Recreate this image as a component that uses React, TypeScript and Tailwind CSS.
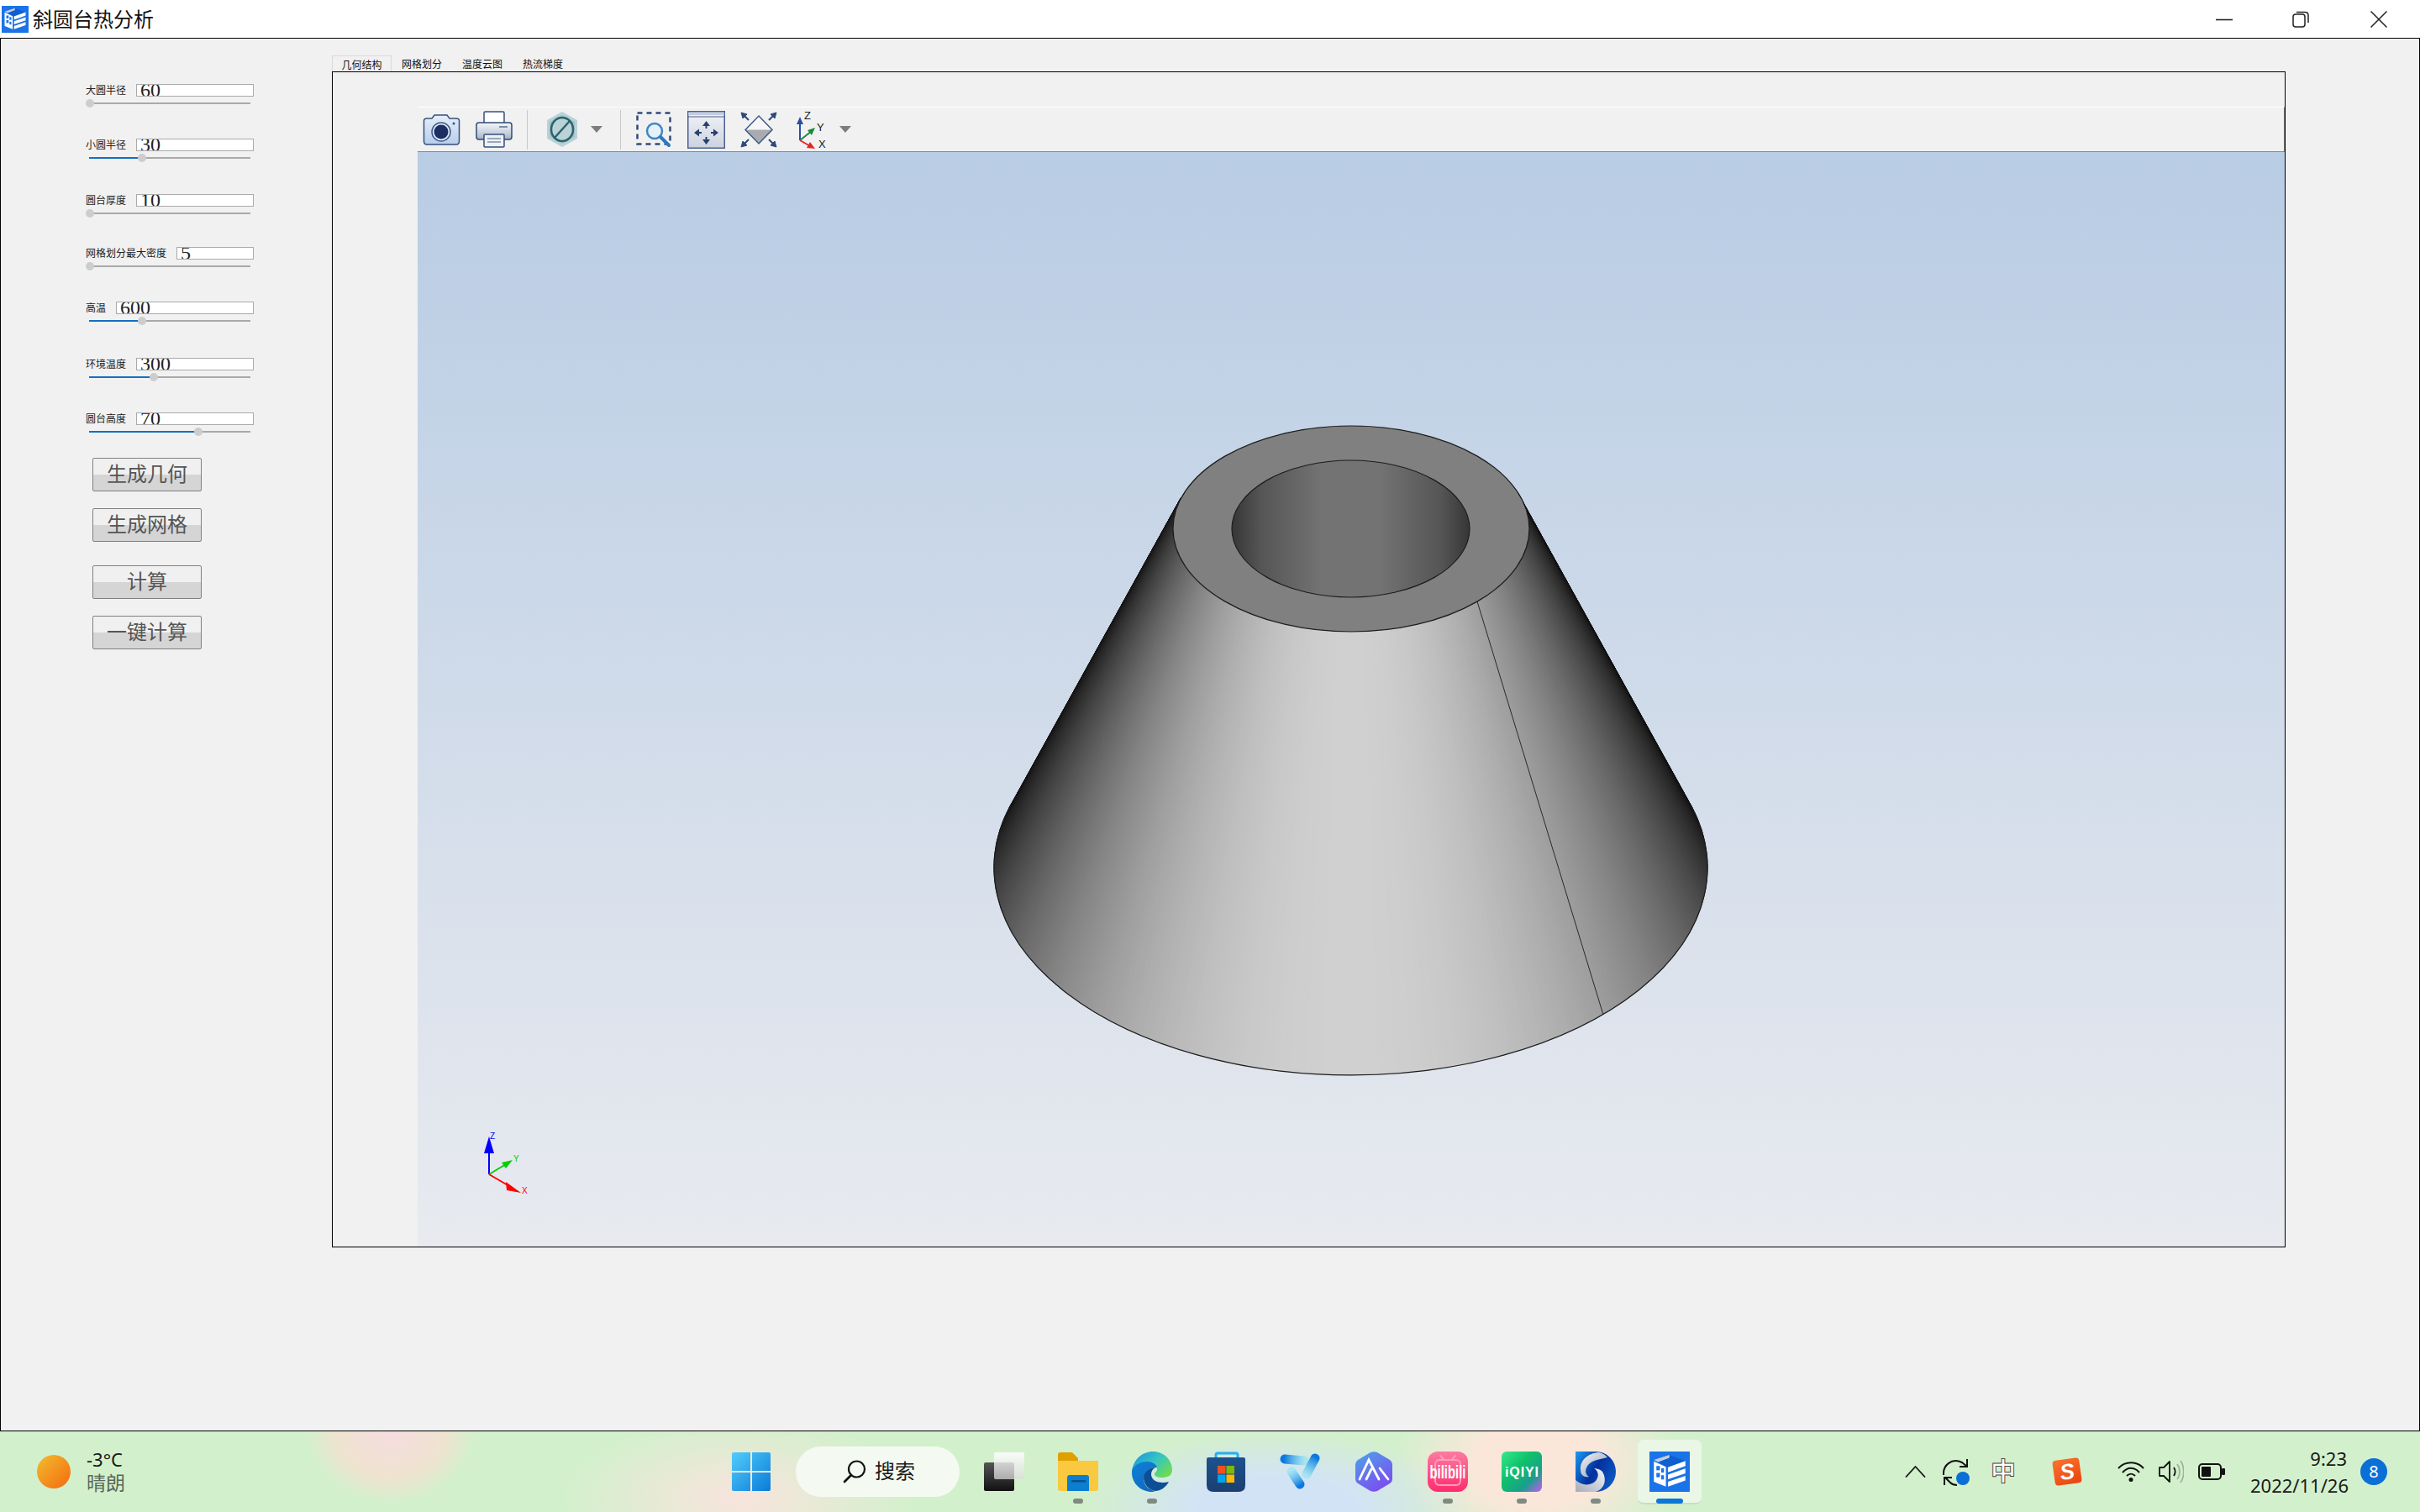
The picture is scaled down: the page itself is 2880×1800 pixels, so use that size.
import React from 'react';

const sliders = [
  { label: '大圆半径', value: '60', thumb: 107, mt: 'mt-[54px]', labelW: 'w-[60px]' },
  { label: '小圆半径', value: '30', thumb: 169, mt: 'mt-[36px]', labelW: 'w-[60px]' },
  { label: '圆台厚度', value: '10', thumb: 107, mt: 'mt-[37px]', labelW: 'w-[60px]' },
  { label: '网格划分最大密度', value: '5', thumb: 107, mt: 'mt-[34px]', labelW: 'w-[108px]' },
  { label: '高温', value: '600', thumb: 169, mt: 'mt-[36px]', labelW: 'w-[36px]' },
  { label: '环境温度', value: '300', thumb: 183, mt: 'mt-[38px]', labelW: 'w-[60px]' },
  { label: '圆台高度', value: '70', thumb: 236, mt: 'mt-[36px]', labelW: 'w-[60px]' },
];

const buttons = [
  { label: '生成几何', mt: 'mt-[25px]' },
  { label: '生成网格', mt: 'mt-[20px]' },
  { label: '计算', mt: 'mt-[28px]' },
  { label: '一键计算', mt: 'mt-[20px]' },
];

const tabs = ['几何结构', '网格划分', '温度云图', '热流梯度'];

function SliderRow({ label, value, thumb, mt, labelW }: (typeof sliders)[number]) {
  return (
    <div className={`h-[29px] w-[200px] ${mt}`}>
      <div className="flex h-[15px] items-center">
        <span className={`${labelW} mt-[2px] shrink-0 text-[12px] leading-[15px] text-[#222]`}>{label}</span>
        <div className="h-[15px] flex-1 overflow-hidden border border-[#aaaaaa] bg-white pl-[4px]">
          <div className="-mt-[6px] font-['Liberation_Serif',serif] text-[24px] leading-[24px] text-[#222]">{value}</div>
        </div>
      </div>
      <div className="relative mt-[7px] ml-[4px] h-[2px] w-[192px] bg-[#a9a9a9]">
        <div className="h-[2px] bg-[#1270c4]" style={{ width: thumb - 106 }} />
        <div
          className="absolute -top-[4px] h-[10px] w-[10px] -translate-x-1/2 rounded-full bg-[#cdcdcd]"
          style={{ left: thumb - 106 }}
        />
      </div>
    </div>
  );
}

function AppIcon({ size }: { size: number }) {
  return (
    <svg width={size} height={size} viewBox="0 0 32 32">
      <rect width="32" height="32" rx="0.5" fill="#1a73e8" />
      <polygon points="15.8,2.7 28.5,7.5 14.5,12.5 6.9,8.4" fill="#0f5fd0" />
      <polygon points="3.5,6.7 15.8,2.7 15.8,5 6.9,8.4" fill="#c5cedb" />
      <polygon points="3.5,7.8 13,12.2 13,27.8 3.5,24" fill="#fff" />
      <rect x="5.5" y="11.5" width="2.8" height="3.4" fill="#1a73e8" />
      <rect x="9.3" y="13.3" width="2.2" height="3.4" fill="#1a73e8" />
      <rect x="5.5" y="17" width="2.8" height="3.4" fill="#1a73e8" />
      <rect x="9.3" y="18.8" width="2.2" height="3.4" fill="#1a73e8" />
      <polygon points="14.7,12.5 28.5,7.5 28.5,11.5 14.7,16.5" fill="#fff" />
      <polygon points="14.7,18.3 28.5,13.5 28.5,17.3 14.7,22" fill="#fff" />
      <polygon points="14.7,24 28.5,19.3 28.5,23 14.7,27.8" fill="#fff" />
    </svg>
  );
}

function Caret() {
  return (
    <svg width="14" height="8" viewBox="0 0 14 8" className="shrink-0">
      <polygon points="0,0 14,0 7,8" fill="#7d7d7d" />
    </svg>
  );
}

function ToolbarSeparator({ className }: { className: string }) {
  return <div className={`h-[47px] w-px bg-[#c8c8c8] ${className}`} />;
}

function Toolbar() {
  return (
    <div className="flex h-[54px] shrink-0 items-center border-t border-r border-b border-t-white border-r-[#777] border-b-[#8a8a8a] bg-[#f1f1f1] pl-[6px]">
      {/* camera */}
      <svg width="45" height="37" viewBox="0 0 45 37" className="shrink-0">
        <defs>
          <linearGradient id="camBody" x1="0" y1="0" x2="0" y2="1">
            <stop offset="0" stopColor="#e6effa" />
            <stop offset="1" stopColor="#b7cdea" />
          </linearGradient>
        </defs>
        <path d="M1.5 8 Q1.5 5 5 5 H11 L14 1 H29 L32 5 H40 Q43.5 5 43.5 8 V32 Q43.5 36 40 36 H5 Q1.5 36 1.5 32 Z" fill="url(#camBody)" stroke="#36507e" strokeWidth="1.5" />
        <circle cx="22" cy="21" r="11" fill="#e2ebf7" stroke="#3d5a8c" strokeWidth="1.5" />
        <circle cx="22" cy="21" r="8.5" fill="#1b2f62" />
        <circle cx="37" cy="11" r="1.5" fill="#36507e" />
      </svg>
      {/* printer */}
      <svg width="44" height="44" viewBox="0 0 44 44" className="ml-[18px] shrink-0">
        <defs>
          <linearGradient id="prnBody" x1="0" y1="0" x2="0" y2="1">
            <stop offset="0" stopColor="#f4f6f9" />
            <stop offset="0.6" stopColor="#c8d2de" />
            <stop offset="1" stopColor="#9fb0c4" />
          </linearGradient>
        </defs>
        <rect x="10" y="1" width="24" height="15" rx="1.5" fill="#fff" stroke="#36507e" strokeWidth="1.5" />
        <rect x="1" y="14" width="42" height="20" rx="3" fill="url(#prnBody)" stroke="#2f4a72" strokeWidth="1.5" />
        <rect x="28" y="18" width="10" height="2" fill="#7c8ea6" />
        <rect x="10" y="28" width="24" height="15" rx="1" fill="#eef1f5" stroke="#36507e" strokeWidth="1.5" />
        <path d="M14 33 H30 M14 37 H30" stroke="#7c8ea6" strokeWidth="1.5" />
      </svg>
      <ToolbarSeparator className="ml-[17px]" />
      {/* no-entry hexagon */}
      <svg width="36" height="42" viewBox="0 0 36 42" className="ml-[23px] shrink-0">
        <polygon points="18,0 36,10 36,32 18,42 0,32 0,10" fill="#b9d2d6" />
        <polygon points="18,4 33,12 33,30 18,38 3,30 3,12" fill="#a3c0c6" />
        <ellipse cx="18" cy="21" rx="13" ry="14" fill="#bcd2d6" stroke="#28656d" strokeWidth="2.5" />
        <path d="M9 31 L27 11" stroke="#28656d" strokeWidth="2.5" />
      </svg>
      <div className="ml-[16px]">
        <Caret />
      </div>
      <ToolbarSeparator className="ml-[21px]" />
      {/* zoom window */}
      <svg width="43" height="42" viewBox="0 0 43 42" className="ml-[18px] shrink-0">
        <rect x="1.5" y="1.5" width="39" height="37" fill="none" stroke="#2f4a7a" strokeWidth="2.5" strokeDasharray="6 5" />
        <circle cx="22" cy="23" r="9" fill="#e6f0fa" stroke="#3f86c4" strokeWidth="2.5" />
        <path d="M29 30 L39 40" stroke="#2f78c0" strokeWidth="4" strokeLinecap="round" />
      </svg>
      {/* pan window */}
      <svg width="45" height="45" viewBox="0 0 45 45" className="ml-[18px] shrink-0">
        <defs>
          <linearGradient id="panBody" x1="0" y1="0" x2="0" y2="1">
            <stop offset="0" stopColor="#f2f3f7" />
            <stop offset="1" stopColor="#ccd2df" />
          </linearGradient>
        </defs>
        <rect x="0.75" y="0.75" width="43.5" height="43.5" fill="url(#panBody)" stroke="#4a618f" strokeWidth="1.5" />
        <rect x="1.5" y="2" width="42" height="3" fill="#c2cee0" />
        <path d="M1 7 H44" stroke="#4a618f" strokeWidth="1" />
        <path d="M22.5 17 V21 M22.5 31 V35 M13 26 H17 M28 26 H32" stroke="#28406e" strokeWidth="2" />
        <path d="M22.5 12 L18 18 H27 Z M22.5 40 L18 34 H27 Z M8 26 L14 21.5 V30.5 Z M37 26 L31 21.5 V30.5 Z" fill="#28406e" />
      </svg>
      {/* fit all */}
      <svg width="44" height="43" viewBox="0 0 44 43" className="ml-[18px] shrink-0">
        <polygon points="22,5 38,21.5 6,21.5" fill="#f6f6f8" />
        <polygon points="6,21.5 38,21.5 22,38" fill="#a9abb1" />
        <polygon points="22,5 38,21.5 22,38 6,21.5" fill="none" stroke="#40598a" strokeWidth="1.5" />
        <path d="M1 1 L8 3 L3 8 Z M43 1 L36 3 L41 8 Z M1 42 L8 40 L3 35 Z M43 42 L36 40 L41 35 Z" fill="#2f4a7a" stroke="#2f4a7a" />
        <path d="M4 4 L10 10 M40 4 L34 10 M4 39 L10 33 M40 39 L34 33" stroke="#2f4a7a" strokeWidth="2" />
      </svg>
      {/* axes */}
      <svg width="38" height="46" viewBox="0 0 38 46" className="ml-[23px] shrink-0">
        <path d="M4 36 V14" stroke="#2a4ea6" strokeWidth="2" />
        <polygon points="4,8 0,17 8,17" fill="#2a4ea6" />
        <path d="M4 36 L18 25" stroke="#1a8a3c" strokeWidth="2" />
        <polygon points="22,21 13,24 18,30" fill="#1a8a3c" />
        <path d="M4 36 L18 44" stroke="#e02828" strokeWidth="2" />
        <polygon points="22,46 12,45 16,38" fill="#e02828" />
        <text x="9" y="11" fontSize="13" fill="#222" fontFamily="'Liberation Sans',sans-serif">Z</text>
        <text x="24" y="25" fontSize="13" fill="#222" fontFamily="'Liberation Sans',sans-serif">Y</text>
        <text x="26" y="45" fontSize="13" fill="#222" fontFamily="'Liberation Sans',sans-serif">X</text>
      </svg>
      <div className="ml-[13px]">
        <Caret />
      </div>
    </div>
  );
}

function coneSlices() {
  const tangent = 107.7;
  const n = 240;
  const out: { points: string; gray: number }[] = [];
  for (let i = 0; i < n; i++) {
    const a = ((-tangent + (2 * tangent * i) / n) * Math.PI) / 180;
    const b = ((-tangent + (2 * tangent * (i + 1)) / n) * Math.PI) / 180;
    const mid = (a + b) / 2;
    const t = Math.max(0, (Math.cos(mid) + 0.3044) / 1.3044);
    const gray = Math.round(16 + 192 * Math.pow(t, 1.2));
    const pt = (ang: number, cy: number, rx: number, ry: number) =>
      `${(1607.5 + rx * Math.sin(ang)).toFixed(1)},${(cy + ry * Math.cos(ang)).toFixed(1)}`;
    out.push({
      points: [pt(a, 629.5, 212, 122.5), pt(b, 629.5, 212, 122.5), pt(b, 1033, 424.5, 247), pt(a, 1033, 424.5, 247)].join(' '),
      gray,
    });
  }
  return out;
}

// drawn in page coordinates, viewer starts at 497,181
function ConeView() {
  const slices = coneSlices();
  return (
    <svg className="h-full w-full" viewBox="497 181 2222 1303">
      <defs>
        <linearGradient id="holeShade" x1="0" y1="0" x2="1" y2="0">
          <stop offset="0" stopColor="#363636" />
          <stop offset="0.12" stopColor="#555" />
          <stop offset="0.38" stopColor="#737373" />
          <stop offset="0.62" stopColor="#737373" />
          <stop offset="0.88" stopColor="#555" />
          <stop offset="1" stopColor="#363636" />
        </linearGradient>
      </defs>
      {slices.map((s, i) => (
        <polygon
          key={i}
          points={s.points}
          fill={`rgb(${s.gray},${s.gray},${s.gray})`}
          stroke={`rgb(${s.gray},${s.gray},${s.gray})`}
          strokeWidth="1"
        />
      ))}
      <path d="M1203 958 A424.5 247 0 1 0 2012 958" fill="none" stroke="#1c1c1c" strokeWidth="1.2" />
      <path d="M1758 716 L1908 1208" stroke="#2a2a2a" strokeWidth="1" />
      <ellipse cx="1608" cy="629.5" rx="212" ry="122.5" fill="#808080" stroke="#1c1c1c" strokeWidth="1.2" />
      <ellipse cx="1607.5" cy="629.5" rx="141.5" ry="81.5" fill="url(#holeShade)" stroke="#1c1c1c" strokeWidth="1.2" />

      <path d="M582 1398 V1370" stroke="#0000ff" strokeWidth="2" />
      <polygon points="582,1353 576,1373 588,1373" fill="#0000ff" />
      <path d="M582 1398 L602 1386" stroke="#00d000" strokeWidth="2" />
      <polygon points="610,1381 597,1384 602,1391" fill="#00d000" />
      <path d="M582 1398 L606 1412" stroke="#ff0000" strokeWidth="2" />
      <polygon points="620,1420 602,1407 603,1417" fill="#ff0000" />
      <text x="583" y="1356" fontSize="10" fill="#0000ff" fontFamily="'Liberation Sans',sans-serif">Z</text>
      <text x="611" y="1383" fontSize="10" fill="#00d000" fontFamily="'Liberation Sans',sans-serif">Y</text>
      <text x="621" y="1421" fontSize="10" fill="#ff0000" fontFamily="'Liberation Sans',sans-serif">X</text>
    </svg>
  );
}

function StartIcon() {
  return (
    <svg width="46" height="46" viewBox="0 0 46 46" className="shrink-0">
      <defs>
        <linearGradient id="winA" x1="0" y1="0" x2="1" y2="1">
          <stop offset="0" stopColor="#52cdfb" />
          <stop offset="1" stopColor="#0a7bd8" />
        </linearGradient>
      </defs>
      <path d="M0 2 Q0 0 2 0 H22 V22 H0 Z M24 0 H44 Q46 0 46 2 V22 H24 Z M0 24 H22 V46 H2 Q0 46 0 44 Z M24 24 H46 V44 Q46 46 44 46 H24 Z" fill="url(#winA)" />
    </svg>
  );
}

function TaskIcon({ dot, children }: { dot?: boolean; children: React.ReactNode }) {
  return (
    <div className="relative flex h-[48px] w-[48px] shrink-0 items-center justify-center">
      {children}
      {dot && <div className="absolute -bottom-[14px] left-[18px] h-[6px] w-[12px] rounded-full bg-[#7f8a80]" />}
    </div>
  );
}

function TaskView() {
  return (
    <svg width="48" height="46" viewBox="0 0 48 46">
      <defs>
        <linearGradient id="tvDark" x1="0" y1="0" x2="0" y2="1">
          <stop offset="0" stopColor="#555" />
          <stop offset="1" stopColor="#111" />
        </linearGradient>
        <linearGradient id="tvLight" x1="0" y1="0" x2="0" y2="1">
          <stop offset="0" stopColor="#fff" />
          <stop offset="1" stopColor="#dcdcdc" stopOpacity="0.85" />
        </linearGradient>
      </defs>
      <rect x="0" y="12" width="36" height="34" rx="2" fill="url(#tvDark)" />
      <rect x="12" y="0" width="36" height="32" rx="2" fill="url(#tvLight)" opacity="0.85" />
    </svg>
  );
}

function Explorer() {
  return (
    <svg width="48" height="46" viewBox="0 0 48 46">
      <path d="M0 3 Q0 0 3 0 H17 L24 7 V16 H0 Z" fill="#dfa100" />
      <path d="M0 10 H48 V43 Q48 46 45 46 H3 Q0 46 0 43 Z" fill="#fbc93f" />
      <path d="M11 46 V30 Q11 27 14 27 H34 Q37 27 37 30 V46 Z" fill="#0b7ed0" />
      <rect x="16" y="33" width="17" height="2.5" fill="#0a4f8a" />
    </svg>
  );
}

function Edge() {
  return (
    <svg width="48" height="48" viewBox="0 0 48 48">
      <defs>
        <linearGradient id="edgeTop" x1="0" y1="0" x2="1" y2="0.7">
          <stop offset="0" stopColor="#1a8fdc" />
          <stop offset="0.55" stopColor="#35c4c4" />
          <stop offset="1" stopColor="#6bdc55" />
        </linearGradient>
        <linearGradient id="edgeLow" x1="0" y1="0" x2="0.6" y2="1">
          <stop offset="0" stopColor="#0f80d8" />
          <stop offset="1" stopColor="#0f6cc0" />
        </linearGradient>
      </defs>
      <path d="M0 23 C2 9 13 0 25 0 C38 0 48 10 48 22 C48 29 42 31 36 31 C30 31 27 29 27 27 C27 25 30 24 30 21 C30 16 24 13 19 13 C10 13 3 16 0 23 Z" fill="url(#edgeTop)" />
      <path d="M0 23 C2 16 10 12 18 12 C24 12 29 15 30 19 C22 18 14 24 14 32 C14 40 20 46 28 47 C26 48 25 48 24 48 C10 48 -1 37 0 23 Z" fill="url(#edgeLow)" />
      <path d="M14 31 C14 24 21 19 28 19 C23 22 22 27 24 31 C27 37 36 38 44 36 C40 43 34 47 28 47 C20 46 14 39 14 31 Z" fill="#0d4f96" />
    </svg>
  );
}

function Store() {
  return (
    <svg width="46" height="48" viewBox="0 0 46 48">
      <defs>
        <linearGradient id="storeBag" x1="0" y1="0" x2="0" y2="1">
          <stop offset="0" stopColor="#1c528e" />
          <stop offset="1" stopColor="#1c3f70" />
        </linearGradient>
      </defs>
      <path d="M11 11 V4 Q11 2 13 2 H35 Q37 2 37 4 V11" fill="none" stroke="#22b0f0" strokeWidth="3" />
      <path d="M0 9 Q0 7 2 7 H44 Q46 7 46 9 V40 Q46 48 38 48 H8 Q0 48 0 40 Z" fill="url(#storeBag)" />
      <rect x="13" y="17" width="9.5" height="9.5" fill="#f25022" />
      <rect x="23.5" y="17" width="9.5" height="9.5" fill="#7fba00" />
      <rect x="13" y="27.5" width="9.5" height="9.5" fill="#00a4ef" />
      <rect x="23.5" y="27.5" width="9.5" height="9.5" fill="#ffb900" />
    </svg>
  );
}

function VIcon() {
  return (
    <svg width="48" height="44" viewBox="0 0 48 44">
      <defs>
        <linearGradient id="vA" gradientUnits="userSpaceOnUse" x1="5" y1="7" x2="30" y2="9">
          <stop offset="0" stopColor="#0a78e0" />
          <stop offset="1" stopColor="#7fe0f5" stopOpacity="0.5" />
        </linearGradient>
        <linearGradient id="vB" gradientUnits="userSpaceOnUse" x1="43" y1="5" x2="31" y2="27">
          <stop offset="0" stopColor="#0a78e0" />
          <stop offset="1" stopColor="#7fe6f5" stopOpacity="0.5" />
        </linearGradient>
        <linearGradient id="vC" gradientUnits="userSpaceOnUse" x1="14" y1="20" x2="25" y2="38">
          <stop offset="0" stopColor="#7fe6f5" stopOpacity="0.5" />
          <stop offset="1" stopColor="#0a78e0" />
        </linearGradient>
      </defs>
      <path d="M6 7 L29 9" stroke="url(#vA)" strokeWidth="11" strokeLinecap="round" />
      <path d="M42 6 L32 25" stroke="url(#vB)" strokeWidth="11" strokeLinecap="round" />
      <path d="M14 22 L24 37" stroke="url(#vC)" strokeWidth="11" strokeLinecap="round" />
    </svg>
  );
}

function HexIcon() {
  return (
    <svg width="44" height="48" viewBox="0 0 44 48">
      <defs>
        <linearGradient id="hexFill" x1="0" y1="0" x2="0.6" y2="1">
          <stop offset="0" stopColor="#4da3ea" />
          <stop offset="1" stopColor="#7a4ff0" />
        </linearGradient>
      </defs>
      <path d="M18 1 Q22 -0.5 26 1 L41 10 Q44 12 44 15 V33 Q44 36 41 38 L26 47 Q22 48.5 18 47 L3 38 Q0 36 0 33 V15 Q0 12 3 10 Z" fill="url(#hexFill)" />
      <path d="M5 33 L16 10 L28 33 M13 33 L19 21 M29 20 L39 33" fill="none" stroke="#fff" strokeWidth="2.8" strokeLinecap="round" />
    </svg>
  );
}

function Bilibili() {
  return (
    <svg width="48" height="48" viewBox="0 0 48 48">
      <defs>
        <linearGradient id="biliBg" x1="0" y1="0" x2="0" y2="1">
          <stop offset="0" stopColor="#fb7ba0" />
          <stop offset="1" stopColor="#fe2c6e" />
        </linearGradient>
      </defs>
      <rect width="48" height="48" rx="12" fill="url(#biliBg)" />
      <path d="M15 5 L20 10 M33 5 L28 10" stroke="#ff9dbb" strokeWidth="2" strokeLinecap="round" />
      <rect x="9" y="10" width="30" height="30" rx="5" fill="none" stroke="#ff9dbb" strokeWidth="2" />
      <text x="24" y="32" textAnchor="middle" fontSize="22" fontWeight="700" fill="#fff" textLength="43" lengthAdjust="spacingAndGlyphs" fontFamily="'Liberation Sans',sans-serif">
        bilibili
      </text>
    </svg>
  );
}

function Iqiyi() {
  return (
    <svg width="48" height="48" viewBox="0 0 48 48">
      <defs>
        <linearGradient id="iqBg" x1="0" y1="0" x2="1" y2="1">
          <stop offset="0" stopColor="#35ea88" />
          <stop offset="0.4" stopColor="#0fc06c" />
          <stop offset="0.72" stopColor="#1a9e8c" />
          <stop offset="1" stopColor="#cc58f4" />
        </linearGradient>
      </defs>
      <rect width="48" height="48" rx="6" fill="url(#iqBg)" />
      <text x="24" y="30" textAnchor="middle" fontSize="16" fontWeight="700" fill="#fff" textLength="40" lengthAdjust="spacing" fontFamily="'Liberation Sans',sans-serif">
        iQIYI
      </text>
    </svg>
  );
}

function Swirl() {
  return (
    <svg width="48" height="48" viewBox="0 0 48 48">
      <defs>
        <linearGradient id="swBlue" x1="0" y1="0" x2="1" y2="0.6">
          <stop offset="0" stopColor="#1d9bf0" />
          <stop offset="0.55" stopColor="#01309f" />
          <stop offset="1" stopColor="#0d57c0" />
        </linearGradient>
        <linearGradient id="swGray" x1="0" y1="0" x2="1" y2="1">
          <stop offset="0" stopColor="#f4f5f8" />
          <stop offset="1" stopColor="#8c98ae" />
        </linearGradient>
        <linearGradient id="swGray2" x1="1" y1="0" x2="0" y2="1">
          <stop offset="0" stopColor="#f2f4f7" />
          <stop offset="1" stopColor="#a6adba" />
        </linearGradient>
      </defs>
      <path d="M0 0 H24 A24 24 0 0 1 24 48 H0 Z" fill="url(#swBlue)" />
      <path d="M28 1 C14 2 5 11 6 22 C6 28 10 31 16 30 C11 27 11 21 15 16 C20 10 30 9 38 7 C36 4 32 2 28 1 Z" fill="url(#swGray)" />
      <path d="M0 48 H24 C34 45 38 34 32 24 C29 21 25 20 22 20 C28 24 28 30 24 35 C18 41 8 41 0 34 Z" fill="url(#swGray2)" />
    </svg>
  );
}

function Tray() {
  return (
    <>
      <svg width="25" height="14" viewBox="0 0 25 14" className="ml-[256px] shrink-0">
        <path d="M1 13.5 L12.5 1 L24 13.5" fill="none" stroke="#1a1a1a" strokeWidth="1.8" />
      </svg>
      <svg width="32" height="33" viewBox="0 0 32 33" className="ml-[20px] shrink-0">
        <path d="M1 20 C0 9 10 -1 23 5 L28 9" fill="none" stroke="#111" strokeWidth="2" />
        <path d="M29 1 V10 H20" fill="none" stroke="#111" strokeWidth="2" />
        <path d="M3 23 L9 29 C11 31 14 32 17 32" fill="none" stroke="#111" strokeWidth="2" />
        <path d="M2 32 V23 H11" fill="none" stroke="#111" strokeWidth="2" />
        <circle cx="24" cy="24" r="8" fill="#0a6fd6" />
      </svg>
      <svg width="28" height="34" viewBox="0 0 28 34" className="ml-[26px] shrink-0">
        <text x="14" y="27" textAnchor="middle" fontSize="30" fontWeight="700" fill="#fff" stroke="#444" strokeWidth="0.9" fontFamily="'Noto Sans CJK SC',sans-serif">
          中
        </text>
      </svg>
      <div className="ml-[46px] flex h-[30px] w-[32px] shrink-0 -rotate-[8deg] items-center justify-center rounded-[4px] bg-[linear-gradient(160deg,#f9742c,#e9430f)] font-['Liberation_Sans',sans-serif] text-[26px] font-bold italic text-white">
        S
      </div>
      <svg width="32" height="24" viewBox="0 0 32 24" className="ml-[44px] shrink-0">
        <path d="M1 8 C9 -1 23 -1 31 8 M6 13 C12 6 20 6 26 13 M11 17 C14 14 18 14 21 17" fill="none" stroke="#111" strokeWidth="2" />
        <circle cx="16" cy="21.5" r="2.5" fill="#111" />
      </svg>
      <svg width="30" height="28" viewBox="0 0 30 28" className="ml-[17px] shrink-0">
        <path d="M1 9 H6 L13 2 V26 L6 19 H1 Z" fill="none" stroke="#111" strokeWidth="1.8" strokeLinejoin="round" />
        <path d="M18 9 C20 12 20 16 18 19" fill="none" stroke="#111" strokeWidth="1.8" />
        <path d="M22 5 C26 10 26 18 22 23 M26 1 C31 8 31 20 26 27" fill="none" stroke="#9eb39b" strokeWidth="1.8" />
      </svg>
      <svg width="32" height="20" viewBox="0 0 32 20" className="ml-[17px] shrink-0">
        <rect x="1" y="1" width="26" height="18" rx="4" fill="none" stroke="#111" strokeWidth="2" />
        <rect x="4" y="4" width="11" height="12" rx="1" fill="#111" />
        <rect x="28" y="6" width="4" height="8" rx="1" fill="#111" />
      </svg>
      <div className="ml-[30px] w-[115px] shrink-0 text-right font-['Noto_Sans',sans-serif] text-[22px] leading-[32px] text-[#1a1a1a]">
        <div>9:23</div>
        <div>2022/11/26</div>
      </div>
      <div className="ml-[16px] flex h-[32px] w-[32px] shrink-0 items-center justify-center rounded-full bg-[#0a6fd6] font-['Noto_Sans',sans-serif] text-[20px] text-white">
        8
      </div>
    </>
  );
}

export default function App() {
  return (
    <div className="flex h-[1800px] w-[2880px] flex-col overflow-hidden bg-[#f1f1f1] font-['Liberation_Sans','Noto_Sans_CJK_SC',sans-serif]">
      {/* title bar */}
      <div className="flex h-[45px] shrink-0 items-center bg-white pl-[2px]">
        <AppIcon size={32} />
        <span className="mt-[2px] ml-[5px] text-[24px] leading-[32px] text-[#111]">斜圆台热分析</span>
        <div className="ml-auto flex items-center pr-[39px]">
          <svg width="20" height="20" viewBox="0 0 20 20">
            <path d="M0 10.5 H20" stroke="#222" strokeWidth="1.6" />
          </svg>
          <svg width="20" height="20" viewBox="0 0 20 20" className="ml-[71px]">
            <rect x="1" y="4" width="14" height="15" rx="3" fill="none" stroke="#222" strokeWidth="1.5" />
            <path d="M5 1.5 H15 Q19 1.5 19 5 V14" fill="none" stroke="#222" strokeWidth="1.5" />
          </svg>
          <svg width="20" height="20" viewBox="0 0 20 20" className="ml-[73px]">
            <path d="M0.5 0.5 L19.5 19.5 M19.5 0.5 L0.5 19.5" stroke="#222" strokeWidth="1.5" />
          </svg>
        </div>
      </div>

      {/* main window */}
      <div className="flex h-[1659px] shrink-0 border border-black bg-[#f1f1f1]">
        <div className="w-[394px] shrink-0 pl-[101px]">
          {sliders.map((s) => (
            <SliderRow key={s.label} {...s} />
          ))}
          <div className="pl-[8px]">
            {buttons.map((b) => (
              <div
                key={b.label}
                className={`flex h-[40px] w-[130px] items-center justify-center rounded-[2px] border border-[#808080] bg-[linear-gradient(#f0f0f0_50%,#d5d5d5_50%)] text-[24px] leading-none text-[#555] ${b.mt}`}
              >
                {b.label}
              </div>
            ))}
          </div>
        </div>

        <div className="flex w-[2325px] shrink-0 flex-col pt-[20px]">
          <div className="flex h-[19px] text-[12px] leading-[22px] text-[#111]">
            {tabs.map((t, i) =>
              i === 0 ? (
                <div key={t} className="w-[71px] border-x border-t border-[#d9d9d9] text-center">
                  {t}
                </div>
              ) : (
                <div key={t} className="w-[72px] pl-[12px]">
                  {t}
                </div>
              ),
            )}
          </div>
          <div className="flex h-[1400px] flex-col border border-black pt-[41px] pl-[101px]">
            <Toolbar />
            <div className="min-h-0 flex-1 bg-[linear-gradient(#b8cce4,#e8eaef)]">
              <ConeView />
            </div>
          </div>
        </div>
      </div>

      {/* taskbar */}
      <div className="flex flex-1 items-center bg-[#d3f0cc] bg-[radial-gradient(ellipse_100px_85px_at_465px_0px,#f6dce0_0%,#eee3cf_65%,transparent_100%),radial-gradient(ellipse_210px_96px_at_880px_80px,#f5e5dc_10%,transparent_100%),radial-gradient(ellipse_230px_90px_at_1520px_90px,#d3e3f6_40%,transparent_100%),radial-gradient(ellipse_170px_110px_at_1830px_40px,#fae7da_45%,transparent_100%)] pl-[44px]">
        <div className="h-[40px] w-[40px] shrink-0 rounded-full bg-[linear-gradient(135deg,#f2bd30,#f56a0c)]" />
        <div className="ml-[19px] w-[60px] shrink-0">
          <div className="font-['Noto_Sans',sans-serif] text-[22px] leading-[28px] text-[#1a1a1a]">-3°C</div>
          <div className="text-[23px] leading-[30px] text-[#586858]">晴朗</div>
        </div>
        <div className="ml-[708px]">
          <StartIcon />
        </div>
        <div className="ml-[30px] flex h-[60px] w-[195px] shrink-0 items-center rounded-full bg-[#f4faf1] pl-[56px] text-[24px] text-[#1a1a1a]">
          <svg width="28" height="28" viewBox="0 0 28 28" className="shrink-0">
            <circle cx="16.5" cy="11" r="9.5" fill="none" stroke="#111" strokeWidth="2.2" />
            <path d="M10 18 L2 26" stroke="#111" strokeWidth="2.6" strokeLinecap="round" />
          </svg>
          <span className="ml-[10px]">搜索</span>
        </div>
        <div className="ml-[29px] flex gap-[40px]">
          <TaskIcon>
            <TaskView />
          </TaskIcon>
          <TaskIcon dot>
            <Explorer />
          </TaskIcon>
          <TaskIcon dot>
            <Edge />
          </TaskIcon>
          <TaskIcon>
            <Store />
          </TaskIcon>
          <TaskIcon>
            <VIcon />
          </TaskIcon>
          <TaskIcon>
            <HexIcon />
          </TaskIcon>
          <TaskIcon dot>
            <Bilibili />
          </TaskIcon>
          <TaskIcon dot>
            <Iqiyi />
          </TaskIcon>
          <TaskIcon dot>
            <Swirl />
          </TaskIcon>
          <div className="relative flex h-[48px] w-[48px] shrink-0 items-center justify-center">
            <div className="absolute -top-[14px] -left-[14px] h-[77px] w-[76px] rounded-[7px] border-b-2 border-[#c5dfc0] bg-[#eaf6e6]" />
            <div className="relative">
              <AppIcon size={48} />
            </div>
            <div className="absolute top-[56px] left-[8px] h-[6px] w-[32px] rounded-full bg-[#0a78d4]" />
          </div>
        </div>
        <Tray />
      </div>
    </div>
  );
}
